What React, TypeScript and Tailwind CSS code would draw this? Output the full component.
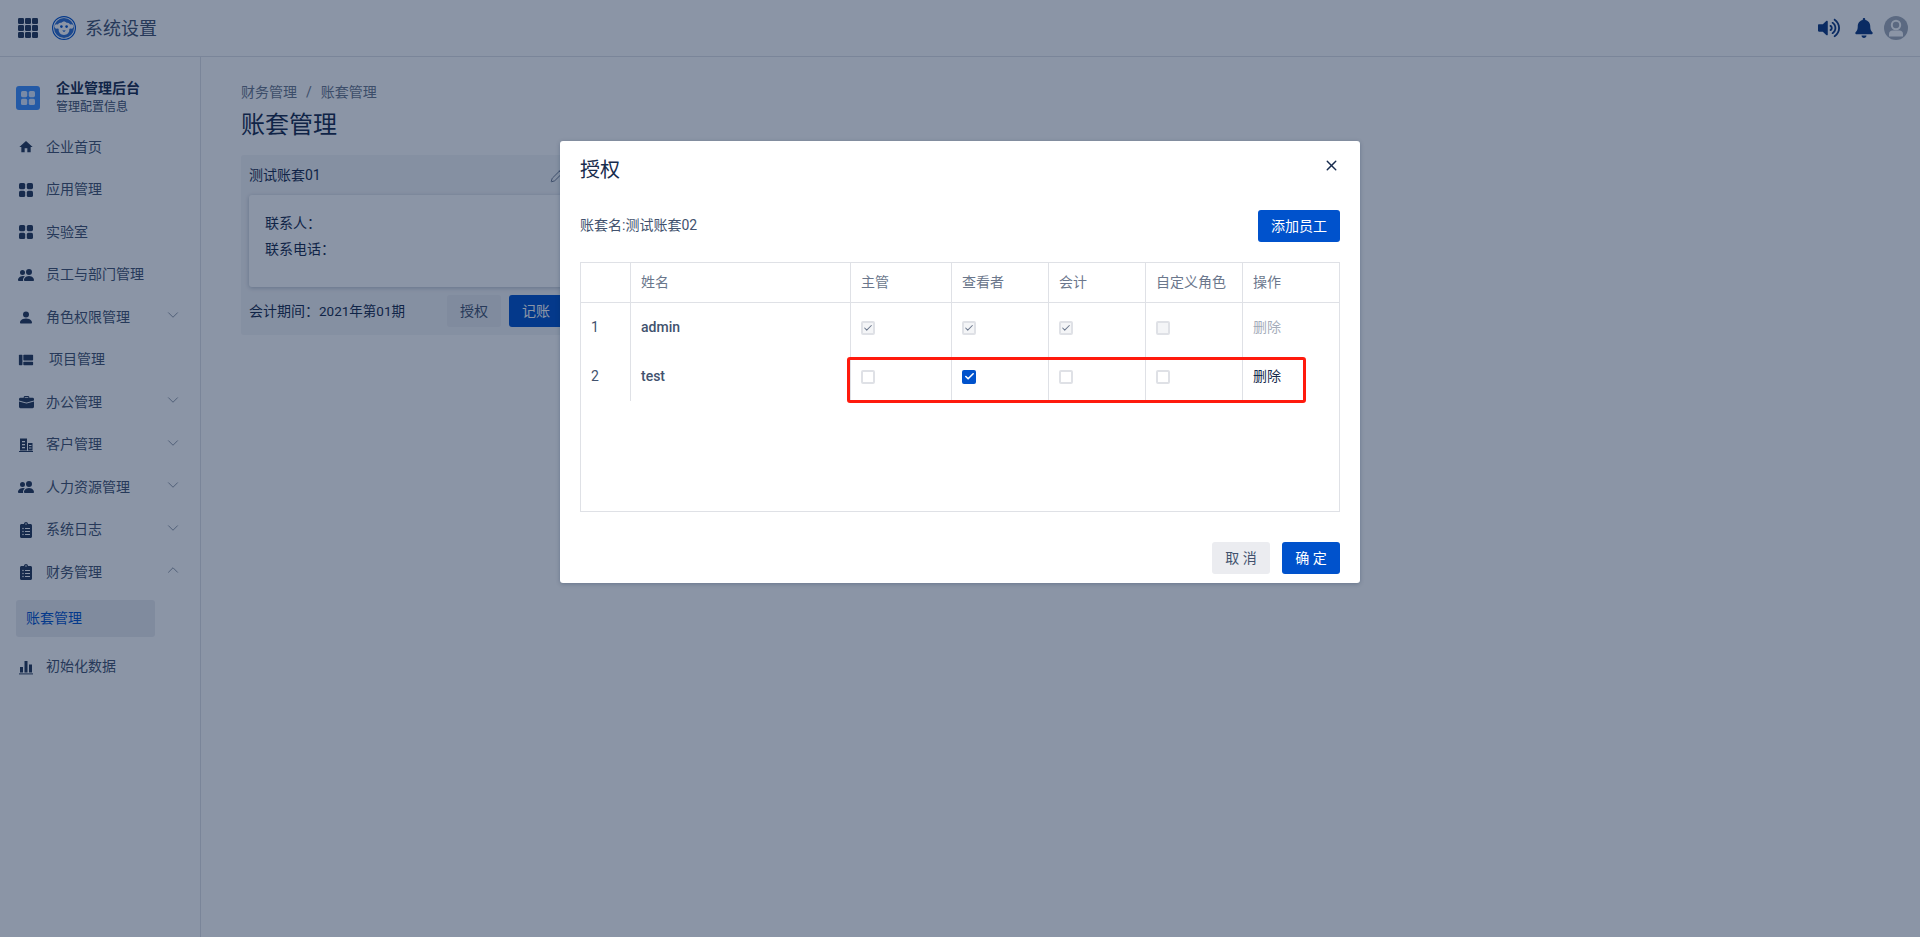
import { Check, ChevronDown, ChevronUp, Pencil, X } from 'lucide-react';
import type { ReactNode } from 'react';
import { BsBriefcaseFill, BsPeopleFill, BsPersonFill } from 'react-icons/bs';
import { FaBell, FaClipboardList, FaVolumeUp } from 'react-icons/fa';
import { MdHome } from 'react-icons/md';

const GridIcon = () => (
  <svg width="16" height="16" viewBox="0 0 16 16" fill="currentColor">
    <rect x="1" y="1" width="6.2" height="6.2" rx="1.6" />
    <rect x="8.8" y="1" width="6.2" height="6.2" rx="1.6" />
    <rect x="1" y="8.8" width="6.2" height="6.2" rx="1.6" />
    <rect x="8.8" y="8.8" width="6.2" height="6.2" rx="1.6" />
  </svg>
);

const ProjectIcon = () => (
  <svg width="18" height="16" viewBox="0 0 18 16" fill="currentColor">
    <rect x="1" y="2" width="4" height="12" rx="0.8" />
    <rect x="6" y="2" width="11" height="6.5" rx="0.8" />
    <rect x="6" y="10" width="11" height="4" rx="0.8" />
  </svg>
);

const BuildingIcon = () => (
  <svg width="16" height="16" viewBox="0 0 16 16" fill="currentColor">
    <path d="M2 1.5h7v12H2z M10 6h4.5v7.5H10z" />
    <rect x="1" y="14" width="14" height="1" />
    <path d="M4 4h3v1.2H4z M4 7h3v1.2H4z M4 10h3v1.2H4z" fill="#fff" />
    <path d="M11 8h2.5v1H11z M11 10.5h2.5v1H11z" fill="#fff" />
  </svg>
);

const ChartIcon = () => (
  <svg width="16" height="16" viewBox="0 0 16 16" fill="currentColor">
    <rect x="2" y="8" width="3" height="5.5" />
    <rect x="6.5" y="2" width="3" height="11.5" />
    <rect x="11" y="5.5" width="3" height="8" />
    <rect x="1" y="14.4" width="14" height="1" />
  </svg>
);

const AppsIcon = () => (
  <svg width="20" height="20" viewBox="0 0 20 20" fill="currentColor">
    {[0, 7, 14].map((y) =>
      [0, 7, 14].map((x) => <rect key={`${x}-${y}`} x={x} y={y} width="6" height="6" rx="1.2" />),
    )}
  </svg>
);

const MonkeyLogo = () => (
  <svg width="24" height="24" viewBox="0 0 24 24">
    <circle cx="12" cy="12" r="11.4" fill="#fff" stroke="#0052cc" strokeWidth="1.2" />
    <circle cx="12" cy="12" r="10" fill="#2f6fd0" />
    <circle cx="4.8" cy="10.5" r="2.3" fill="#fff" />
    <circle cx="19.2" cy="10.5" r="2.3" fill="#fff" />
    <path d="M12 5.500c-1.200 0-2 .7-2.500 1.300C7.200 6.300 5.500 8 5.500 10.300c0 1.200.4 2.200 1.200 3-.4 3 2 5.700 5.300 5.700s5.700-2.700 5.300-5.700c.8-.8 1.200-1.800 1.200-3 0-2.300-1.700-4-4-3.500C14 6.200 13.200 5.500 12 5.500z" fill="#fff" />
    <circle cx="9.400" cy="10.600" r="1.300" fill="#0052cc" />
    <circle cx="14.600" cy="10.600" r="1.300" fill="#0052cc" />
    <path d="M10.200 14.500h3.600l-1.800 1.600z" fill="#0052cc" />
  </svg>
);

const AvatarIcon = () => (
  <svg width="24" height="24" viewBox="0 0 24 24">
    <circle cx="12" cy="12" r="12" fill="#a5adba" />
    <circle cx="12" cy="9" r="4.200" fill="none" stroke="#fff" strokeWidth="2" />
    <path d="M5 20.500v-2.500c0-2 1.500-3.500 3.500-3.500h7c2 0 3.500 1.500 3.500 3.500v2.500z" fill="#fff" />
  </svg>
);

interface NavEntry {
  label: string;
  icon: ReactNode;
  arrow?: 'down' | 'up';
  indent?: boolean;
}

const navTop: NavEntry[] = [
  { label: '企业首页', icon: <MdHome size={22} /> },
  { label: '应用管理', icon: <GridIcon /> },
  { label: '实验室', icon: <GridIcon /> },
  { label: '员工与部门管理', icon: <BsPeopleFill size={16} /> },
  { label: '角色权限管理', icon: <BsPersonFill size={21} />, arrow: 'down' },
  { label: '项目管理', icon: <ProjectIcon />, indent: true },
  { label: '办公管理', icon: <BsBriefcaseFill size={15} />, arrow: 'down' },
  { label: '客户管理', icon: <BuildingIcon />, arrow: 'down' },
  { label: '人力资源管理', icon: <BsPeopleFill size={16} />, arrow: 'down' },
  { label: '系统日志', icon: <FaClipboardList size={16} />, arrow: 'down' },
  { label: '财务管理', icon: <FaClipboardList size={16} />, arrow: 'up' },
];

const NavItem = ({ item }: { item: NavEntry }) => (
  <div className="flex h-[42.5px] items-center pl-[18px] pr-[18px] text-[#42526e]">
    <span className="flex w-[16px] justify-center text-[#253858]">{item.icon}</span>
    <span className={`${item.indent ? 'ml-[15px]' : 'ml-[12px]'} flex-1 text-[14px]`}>{item.label}</span>
    {item.arrow === 'down' && <ChevronDown size={18} strokeWidth={1} className="-mt-1 text-[#6b778c]" />}
    {item.arrow === 'up' && <ChevronUp size={18} strokeWidth={1} className="-mt-1 text-[#6b778c]" />}
  </div>
);

const Box = ({ checked, disabled }: { checked?: boolean; disabled?: boolean }) => {
  if (checked && !disabled) {
    return (
      <span className="flex h-[14px] w-[14px] items-center justify-center rounded-[2px] bg-[#0052cc] text-white">
        <Check size={11} strokeWidth={3.500} />
      </span>
    );
  }
  return (
    <span className={`flex h-[14px] w-[14px] items-center justify-center rounded-[2px] border-2 border-[#dfe1e6] ${disabled ? 'bg-[#f4f5f7]' : 'bg-white'} text-[#6b778c]`}>
      {checked && <Check size={10} strokeWidth={2.500} />}
    </span>
  );
};

const cols = 'grid grid-cols-[50px_220px_101px_97px_97px_97px_1fr]';

const Cell = ({ children, last }: { children?: ReactNode; last?: boolean }) => (
  <div className={`flex items-center pl-[10px] ${last ? '' : 'border-r border-[#dfe1e6]'}`}>{children}</div>
);

const rows = [
  { id: 1, name: 'admin', boxes: [true, true, true, false], disabled: true },
  { id: 2, name: 'test', boxes: [false, true, false, false], disabled: false },
];

const App = () => {
  return (
    <div className="relative h-[937px] w-full overflow-hidden bg-white font-['Roboto','Noto_Sans_CJK_SC',sans-serif] text-[14px] text-[#172b4d]">
      <header className="flex h-[57px] items-center border-b border-[#dfe1e6] pl-[18px] pr-[12px]">
        <span className="text-[#253858]"><AppsIcon /></span>
        <span className="ml-[14px]"><MonkeyLogo /></span>
        <span className="ml-[9px] text-[18px] text-[#42526e]">系统设置</span>
        <div className="ml-auto flex items-center text-[#172b4d]">
          <FaVolumeUp size={22} className="text-[#0d3880]" />
          <FaBell size={20} className="ml-[14px] text-[#0d3880]" />
          <span className="ml-[10px]"><AvatarIcon /></span>
        </div>
      </header>

      <div className="flex h-[880px]">
        <aside className="w-[201px] shrink-0 border-r border-[#dfe1e6] pt-[23px]">
          <div className="mb-[10px] flex h-[36px] items-center pl-[16px]">
            <span className="flex h-[24px] w-[24px] items-center justify-center rounded-[3px] bg-[#3d90ff] text-[#deebff]">
              <GridIcon />
            </span>
            <div className="ml-[16px] leading-[19px]">
              <div className="text-[14px] font-bold text-[#172b4d]">企业管理后台</div>
              <div className="text-[12px] text-[#42526e]">管理配置信息</div>
            </div>
          </div>
          {navTop.map((item) => <NavItem key={item.label} item={item} />)}
          <div className="ml-[16px] mt-[6px] flex h-[37px] w-[139px] items-center rounded-[3px] bg-[#ebecf0] pl-[10px] text-[14px] text-[#0052cc]">账套管理</div>
          <div className="mt-[9px]">
            <NavItem item={{ label: '初始化数据', icon: <ChartIcon /> }} />
          </div>
        </aside>

        <main className="flex-1 pl-[40px] pt-[26px]">
          <div className="flex items-center text-[14px] leading-[18px] text-[#6b778c]">
            <span>财务管理</span>
            <span className="mx-[9px]">/</span>
            <span>账套管理</span>
          </div>
          <h1 className="mt-[6px] text-[24px] leading-[36px] text-[#172b4d]">账套管理</h1>
          <section className="mt-[12px] h-[180px] w-[330px] rounded-[3px] bg-[#f4f5f7] px-[8px]">
            <div className="flex h-[40px] items-center justify-between">
              <span className="text-[#172b4d]">测试账套01</span>
              <Pencil size={15} strokeWidth={1.200} className="mr-[-2px] text-[#42526e]" />
            </div>
            <div className="h-[92px] rounded-[3px] bg-white px-[16px] pt-[15px] leading-[26px] shadow-[0_1px_4px_rgba(9,30,66,0.25)]">
              <div>联系人：</div>
              <div>联系电话：</div>
            </div>
            <div className="mt-[8px] flex items-center justify-between">
              <span>会计期间：<span className="text-[13.5px]">2021年第01期</span></span>
              <div className="flex gap-[8px]">
                <span className="flex h-[32px] w-[54px] items-center justify-center rounded-[3px] bg-[#ebecf0] text-[#42526e]">授权</span>
                <span className="flex h-[32px] w-[54px] items-center justify-center rounded-[3px] bg-[#0052cc] text-white">记账</span>
              </div>
            </div>
          </section>
        </main>
      </div>

      {/* 遮罩层 */}
      <div className="absolute inset-0 bg-[rgba(9,30,66,0.47)]" />

      {/* 授权弹窗 */}
      <div className="absolute left-[560px] top-[141px] flex h-[442px] w-[800px] flex-col rounded-[3px] bg-white px-[20px] shadow-[0_1px_4px_rgba(9,30,66,0.25)]">
        <div className="flex h-[58px] items-center justify-between">
          <h2 className="text-[20px] text-[#172b4d]">授权</h2>
          <X size={17} strokeWidth={2} className="-mt-[10px] text-[#172b4d]" />
        </div>
        <div className="mt-[11px] flex h-[32px] items-center justify-between">
          <span className="-mt-[2px] text-[#42526e]">账套名:测试账套02</span>
          <button className="flex h-[32px] w-[82px] items-center justify-center rounded-[3px] bg-[#0052cc] text-white">添加员工</button>
        </div>
        <div className="mt-[20px] h-[250px] border border-[#dfe1e6]">
          <div className={`${cols} h-[40px] border-b border-[#dfe1e6] text-[#6b778c]`}>
            <Cell />
            <Cell>姓名</Cell>
            <Cell>主管</Cell>
            <Cell>查看者</Cell>
            <Cell>会计</Cell>
            <Cell>自定义角色</Cell>
            <Cell last>操作</Cell>
          </div>
          {rows.map((row) => (
            <div key={row.id} className={`${cols} h-[49px] text-[#42526e]`}>
              <Cell>{row.id}</Cell>
              <Cell><span className="font-medium">{row.name}</span></Cell>
              {row.boxes.map((checked, i) => (
                <Cell key={i}><Box checked={checked} disabled={row.disabled} /></Cell>
              ))}
              <Cell last>
                <span className={row.disabled ? 'text-[#a5adba]' : 'text-[#172b4d]'}>删除</span>
              </Cell>
            </div>
          ))}
        </div>
        <div className="mt-[30px] flex justify-end gap-[12px]">
          <button className="flex h-[32px] w-[58px] items-center justify-center rounded-[3px] bg-[#ebecf0] text-[#42526e]">取 消</button>
          <button className="flex h-[32px] w-[58px] items-center justify-center rounded-[3px] bg-[#0052cc] text-white">确 定</button>
        </div>
      </div>

      {/* 标注红框 */}
      <div className="absolute left-[847px] top-[357px] h-[46px] w-[459px] rounded-[3px] border-[3px] border-[#ff1a0d]" />
    </div>
  );
};

export default App;
